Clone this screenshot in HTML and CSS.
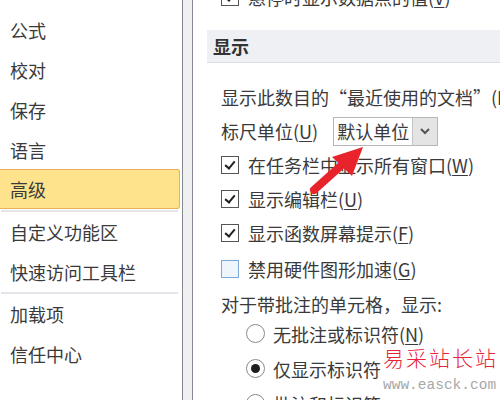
FILE: index.html
```html
<!DOCTYPE html>
<html>
<head>
<meta charset="utf-8">
<link rel="stylesheet" href="styles.css">
</head>
<body>
<div class="page">
  <nav class="sidebar">
    <div class="nav-item">公式</div>
    <div class="nav-item">校对</div>
    <div class="nav-item">保存</div>
    <div class="nav-item">语言</div>
    <div class="nav-item selected">高级</div>
    <div class="nav-sep"></div>
    <div class="nav-item">自定义功能区</div>
    <div class="nav-item">快速访问工具栏</div>
    <div class="nav-sep"></div>
    <div class="nav-item">加载项</div>
    <div class="nav-item">信任中心</div>
  </nav>
  <div class="splitter"></div>
  <main class="content">
    <div class="row cb-row top-row"><span class="cb checked"></span><span>悬停时显示数据点的值(<u>V</u>)</span></div>
    <div class="section-head">显示</div>
    <div class="row text-row nowrap">显示此数目的“最近使用的文档”(R):</div>
    <div class="row unit-row">
      <span>标尺单位(<u>U</u>)</span>
      <div class="select"><span class="select-val">默认单位</span><span class="select-btn"><svg width="12" height="8" viewBox="0 0 12 8"><path d="M2 2 L6 6 L10 2" fill="none" stroke="#555" stroke-width="2"/></svg></span></div>
    </div>
    <div class="row cb-row"><span class="cb checked"></span><span>在任务栏中显示所有窗口(<u>W</u>)</span></div>
    <div class="row cb-row"><span class="cb checked"></span><span>显示编辑栏(<u>U</u>)</span></div>
    <div class="row cb-row"><span class="cb checked"></span><span>显示函数屏幕提示(<u>F</u>)</span></div>
    <div class="row cb-row tall"><span class="cb empty"></span><span>禁用硬件图形加速(<u>G</u>)</span></div>
    <div class="row text-row label-row">对于带批注的单元格，显示:</div>
    <div class="row radio-row"><span class="radio"></span><span>无批注或标识符(<u>N</u>)</span></div>
    <div class="row radio-row"><span class="radio on"></span><span>仅显示标识符</span></div>
    <div class="row radio-row"><span class="radio"></span><span>批注和标识符</span></div>
  </main>
</div>
<svg class="arrow" width="500" height="400" viewBox="0 0 500 400">
  <line x1="314" y1="190" x2="344" y2="163" stroke="#e8232b" stroke-width="8" stroke-linecap="round"/>
  <polygon points="363,147 332,157 352,176" fill="#e8232b"/>
</svg>
<div class="watermark">
  <div class="wm-cn">易采站长站</div>
  <div class="wm-url">www.easck.com</div>
</div>
</body>
</html>
```
FILE: styles.css
```css
* { box-sizing: border-box; }
html, body {
  margin: 0;
  padding: 0;
  width: 500px;
  height: 400px;
  overflow: hidden;
  background: #fff;
}
body {
  font-family: "Noto Sans CJK SC", "Noto Sans", sans-serif;
  font-size: 18px;
  color: #3a3a3a;
  position: relative;
}
u { text-decoration: underline; text-underline-offset: 2px; }
.page {
  display: flex;
  height: 400px;
  overflow: hidden;
}
.sidebar {
  width: 182px;
  flex: none;
  padding-top: 10px;
  display: flex;
  flex-direction: column;
}
.nav-item {
  height: 40px;
  line-height: 40px;
  padding-left: 10px;
  white-space: nowrap;
}
.nav-item.selected {
  width: 180px;
  margin-top: -1px;
  margin-bottom: 1px;
  background: #fee38c;
  border: 1px solid #e9b05a;
  border-left: none;
  border-radius: 0 3px 3px 0;
  line-height: 38px;
}
.nav-sep {
  height: 2px;
  margin: 0 4px 0 1px;
  background: #e3e5ea;
}
.splitter {
  width: 11px;
  flex: none;
  background: #f0f0f0;
  border-left: 1px solid #858a92;
  border-right: 1px solid #858a92;
}
.content {
  flex: 1;
  min-width: 0;
  height: 418px;
  overflow: hidden;
  padding-left: 14px;
  margin-top: -18px;
  display: flex;
  flex-direction: column;
}
.row {
  display: flex;
  align-items: center;
  flex: none;
  height: 34px;
  white-space: nowrap;
  padding-left: 14px;
}
.top-row { height: 30px; }
.section-head {
  flex: none;
  height: 33px;
  margin-top: 18px;
  margin-bottom: 17px;
  background: #eef0f4;
  border-bottom: 1px solid #dadde3;
  font-weight: bold;
  padding-left: 6px;
  line-height: 32px;
  color: #333;
}
.nowrap { overflow: hidden; }
.unit-row { height: 34px; }
.select {
  margin-left: 15px;
  width: 105px;
  height: 29px;
  border: 1px solid #b4b6ba;
  display: flex;
  align-items: stretch;
}
.select-val {
  flex: 1;
  padding-left: 3px;
  line-height: 27px;
}
.select-btn {
  width: 25px;
  background: #e4e4e4;
  border-left: 1px solid #c4c4c4;
  display: flex;
  align-items: center;
  justify-content: center;
}
.cb-row { gap: 9px; }
.cb-row.tall { height: 38px; }
.label-row { height: 28px; padding-top: 4px; }
.cb {
  width: 18px;
  height: 18px;
  flex: none;
  border: 1px solid #555;
  background: #fff;
  position: relative;
}
.cb.checked::after {
  content: "";
  position: absolute;
  left: 5px;
  top: 2px;
  width: 4px;
  height: 8px;
  border-right: 2.5px solid #222;
  border-bottom: 2.5px solid #222;
  transform: rotate(40deg);
}
.cb.empty {
  border-color: #7ba7d9;
  background: #eff5fd;
}
.radio-row { height: 35px; padding-left: 39px; gap: 8px; }
.radio {
  width: 19px;
  height: 19px;
  flex: none;
  border: 1px solid #8a8a8a;
  border-radius: 50%;
  background: #fff;
  display: flex;
  align-items: center;
  justify-content: center;
}
.radio.on::after {
  content: "";
  width: 9px;
  height: 9px;
  border-radius: 50%;
  background: #1e1e1e;
}
.arrow {
  position: absolute;
  left: 0;
  top: 0;
  pointer-events: none;
}
.watermark {
  position: absolute;
  left: 383px;
  top: 342px;
  width: 117px;
}
.wm-cn {
  color: #e8233a;
  font-size: 21px;
  font-weight: 300;
  letter-spacing: 2px;
  line-height: 30px;
  font-family: "Noto Sans CJK SC", sans-serif;
}
.wm-url {
  color: #a8a8a8;
  font-family: "Liberation Mono", monospace;
  font-size: 14.5px;
  line-height: 16px;
  margin-top: 5px;
}
```
